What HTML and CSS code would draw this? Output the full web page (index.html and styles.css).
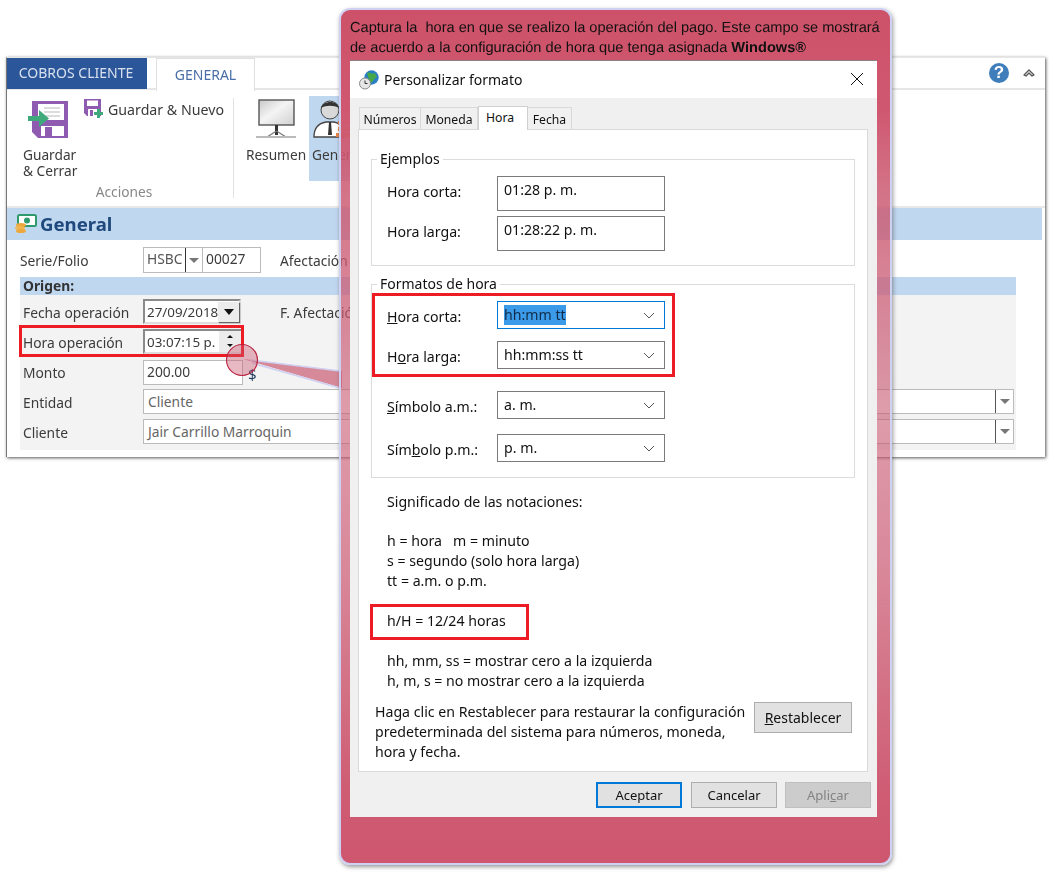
FILE: index.html
```html
<!DOCTYPE html>
<html lang="es">
<head>
<meta charset="utf-8">
<title>Personalizar formato</title>
<link rel="stylesheet" href="styles.css">
</head>
<body>
<div class="stage">

  <section class="app">
    <div class="app-tabs">
      <div class="tab-file">COBROS CLIENTE</div>
      <div class="tab-general">GENERAL</div>
      <div class="app-tabs-right">
        <span class="help">?</span>
        <svg class="collapse" width="14" height="10" viewBox="0 0 14 10"><path d="M2 7 L7 2 L12 7 L10 8 L7 5 L4 8 Z" fill="#fff" stroke="#555" stroke-width="1.3" stroke-linejoin="round"/></svg>
      </div>
    </div>

    <div class="ribbon">
      <div class="group-actions">
        <div class="actions-row">
          <div class="big-btn">
            <svg width="42" height="40" viewBox="0 0 42 40">
              <path d="M4 1 H40 V38 H10 L4 32 Z" fill="#8f5bb0"/>
              <path d="M10 4 H36 V20 H10 Z" fill="#fff"/>
              <path d="M16 8 H32 M16 12 H32 M16 16 H32" stroke="#b9b9b9" stroke-width="1.2"/>
              <path d="M13 26 H36 V36 H13 Z" fill="#fff"/>
              <path d="M17 27 H24 V36 H17 Z" fill="#8f5bb0"/>
              <path d="M0 16 H11 V10 L21 18.5 L11 27 V21 H0 Z" fill="#3fa97c"/>
            </svg>
            <span>Guardar<br>&amp; Cerrar</span>
          </div>
          <div class="small-btn">
            <svg width="21" height="20" viewBox="0 0 21 20">
              <path d="M1 1 H18 V18 H4 L1 15 Z" fill="#8f5bb0"/>
              <path d="M4 2.5 H15 V8 H4 Z" fill="#fff"/>
              <path d="M5 11 H14 V18 H5 Z" fill="#fff"/>
              <path d="M7 12 H10 V18 H7 Z" fill="#8f5bb0"/>
              <path d="M11 14 H14 V11 H17 V14 H20 V17 H17 V20 H14 V17 H11 Z" fill="#3fa97c"/>
            </svg>
            <span>Guardar &amp; Nuevo</span>
          </div>
        </div>
        <div class="group-label">Acciones</div>
      </div>
      <div class="group-views">
        <div class="view-btn">
          <svg width="42" height="42" viewBox="0 0 42 42">
            <defs><linearGradient id="scr" x1="0" y1="0" x2="1" y2="1"><stop offset="0" stop-color="#c9c9c9"/><stop offset=".45" stop-color="#f4f4f4"/><stop offset="1" stop-color="#d0d0d0"/></linearGradient></defs>
            <rect x="4" y="1" width="35" height="25" fill="url(#scr)" stroke="#555" stroke-width="1.4"/>
            <path d="M20 26 H23 L23 36 H20 Z" fill="#333"/>
            <path d="M21.5 32 L12 38 M21.5 32 L31 38" stroke="#777" stroke-width="1.2"/>
            <path d="M1 38 H41" stroke="#bbb" stroke-width="2"/>
          </svg>
          <span>Resumen</span>
        </div>
        <div class="view-btn view-active">
          <svg width="42" height="42" viewBox="0 0 42 42">
            <path d="M2 38 C2 28 8 24 14 23 L22 23 C28 24 32 28 32 38 Z" fill="#fff" stroke="#444" stroke-width="1.3"/>
            <circle cx="18" cy="11" r="9" fill="#d9d9d9" stroke="#444"/>
            <path d="M9 9 C11 1 26 1 27 9 C22 6 14 6 9 9 Z" fill="#333"/>
            <path d="M17 23 H19 L20 36 H16 Z" fill="#333"/>
            <path d="M26 22 H42 V26 H26 Z M26 28 H42 V32 H26 Z M24 34 H40 V38 H24 Z" fill="#e9854a"/>
          </svg>
          <span>General</span>
        </div>
      </div>
    </div>

    <h2 class="section-head">
      <svg width="22" height="20" viewBox="0 0 22 20">
        <rect x="3" y="1" width="18" height="11" rx="1.5" fill="#fff" stroke="#2f9a6e" stroke-width="2"/>
        <circle cx="12" cy="6.5" r="3" fill="#2f9a6e"/>
        <ellipse cx="6" cy="11" rx="5" ry="2" fill="#eda83c"/>
        <ellipse cx="5" cy="14" rx="5" ry="2" fill="#f2b552"/>
        <ellipse cx="6" cy="17" rx="5" ry="2" fill="#eda83c"/>
      </svg>
      General
    </h2>

    <div class="form">
      <div class="serie-row">
        <label class="lbl-serie">Serie/Folio</label>
        <div class="serie-combo"><span class="serie-text">HSBC</span><span class="drop-mini"><i class="arrow-grey"></i></span></div>
        <div class="folio">00027</div>
        <label class="lbl-right">Afectación</label>
      </div>
      <div class="origin-bar">Origen:</div>
      <div class="panel">
        <div class="row">
          <label>Fecha operación</label>
          <div class="field field-date">27/09/2018<span class="date-btn"><i class="arrow-black"></i></span></div>
          <label class="lbl-right2">F. Afectación</label>
        </div>
        <div class="row">
          <label>Hora operación</label>
          <div class="field field-time">03:07:15 p.<span class="spin"><i class="spin-up"></i><i class="spin-down"></i></span></div>
        </div>
        <div class="row row-monto">
          <label>Monto</label>
          <div class="field field-amount">200.00</div>
          <span class="currency">$</span>
        </div>
        <div class="row">
          <label>Entidad</label>
          <div class="field field-wide"><span class="grey-text">Cliente</span><span class="drop-wide"><i class="arrow-grey"></i></span></div>
        </div>
        <div class="row">
          <label>Cliente</label>
          <div class="field field-wide"><span class="grey-text">Jair Carrillo Marroquin</span><span class="drop-wide"><i class="arrow-grey"></i></span></div>
        </div>
      </div>
    </div>
    <div class="red-box red-hora"></div>
  </section>

  <svg class="pointer" width="1053" height="876" viewBox="0 0 1053 876">
    <path d="M243 359 L342 371 L342 388 Z" fill="#c9576e" fill-opacity=".68"/>
    <path d="M250 360 L340 371 M252 363 L340 388" stroke="#cfd0f2" stroke-width="1.6" fill="none"/>
    <circle cx="242" cy="360" r="15.5" fill="#c9576e" fill-opacity=".42" stroke="#bb2040" stroke-width="1.1"/>
  </svg>

  <section class="callout">
    <p class="callout-text"><span class="line-a">Captura la&nbsp; hora en que se realizo la operación del pago. Este campo se mostrará</span> <span class="line-b">de acuerdo a la configuración de hora que tenga asignada <b>Windows®</b></span></p>

    <div class="dialog">
      <div class="dlg-title">
        <svg width="20" height="20" viewBox="0 0 20 20">
          <circle cx="12.5" cy="7.5" r="7.2" fill="#2b7fc4"/>
          <path d="M8 3 C10 1 13 5 16 3 L18 7 C15 8 15 11 12 13 C10 10 9 7 8 3 Z" fill="#46a84a"/>
          <circle cx="6" cy="13.5" r="5.5" fill="#e6e6e6" stroke="#8a8a8a"/>
          <path d="M6 10.5 V13.5 H8.5" stroke="#333" fill="none"/>
        </svg>
        <span>Personalizar formato</span>
        <svg class="dlg-close" width="12" height="12" viewBox="0 0 12 12"><path d="M0 0 L12 12 M12 0 L0 12" stroke="#111" stroke-width="1"/></svg>
      </div>

      <div class="dlg-tabs">
        <div class="dtab dtab-num">Números</div>
        <div class="dtab dtab-mon">Moneda</div>
        <div class="dtab dtab-active">Hora</div>
        <div class="dtab dtab-fec">Fecha</div>
      </div>

      <div class="dlg-panel">
        <fieldset class="gb gb-examples">
          <legend>Ejemplos</legend>
          <div class="gb-row"><span class="gb-label">Hora corta:</span><div class="example">01:28 p. m.</div></div>
          <div class="gb-row"><span class="gb-label">Hora larga:</span><div class="example">01:28:22 p. m.</div></div>
        </fieldset>

        <fieldset class="gb gb-formats">
          <legend>Formatos de hora</legend>
          <div class="gb-row row-c"><span class="gb-label"><u>H</u>ora corta:</span>
            <div class="select select-focus"><span class="sel-text">hh:mm tt</span><svg width="12" height="7" viewBox="0 0 12 7"><path d="M1 1 L6 6 L11 1" fill="none" stroke="#555"/></svg></div></div>
          <div class="gb-row row-l"><span class="gb-label">H<u>o</u>ra larga:</span>
            <div class="select"><span>hh:mm:ss tt</span><svg width="12" height="7" viewBox="0 0 12 7"><path d="M1 1 L6 6 L11 1" fill="none" stroke="#555"/></svg></div></div>
          <div class="gb-row row-a"><span class="gb-label"><u>S</u>ímbolo a.m.:</span>
            <div class="select"><span>a. m.</span><svg width="12" height="7" viewBox="0 0 12 7"><path d="M1 1 L6 6 L11 1" fill="none" stroke="#555"/></svg></div></div>
          <div class="gb-row row-p"><span class="gb-label">Sím<u>b</u>olo p.m.:</span>
            <div class="select"><span>p. m.</span><svg width="12" height="7" viewBox="0 0 12 7"><path d="M1 1 L6 6 L11 1" fill="none" stroke="#555"/></svg></div></div>
        </fieldset>

        <div class="notes">
          <p>Significado de las notaciones:</p>
          <p>h = hora &nbsp; m = minuto<br>s = segundo (solo hora larga)<br>tt = a.m. o p.m.</p>
          <p>h/H = 12/24 horas</p>
          <p>hh, mm, ss = mostrar cero a la izquierda<br>h, m, s = no mostrar cero a la izquierda</p>
        </div>

        <div class="restore">
          <p>Haga clic en Restablecer para restaurar la configuración predeterminada del sistema para números, moneda, hora y fecha.</p>
          <button class="btn btn-restore" type="button"><u>R</u>establecer</button>
        </div>
      </div>

      <div class="dlg-foot">
        <button class="btn btn-ok" type="button">Aceptar</button>
        <button class="btn" type="button">Cancelar</button>
        <button class="btn btn-off" type="button">Apli<u>c</u>ar</button>
      </div>

      <div class="red-box red-formats"></div>
      <div class="red-box red-notation"></div>
    </div>
  </section>
</div>
</body>
</html>
```

FILE: styles.css
```css
* { box-sizing: border-box; }
html, body { margin: 0; padding: 0; background: #fff; }
body { font-family: "Noto Sans", "Open Sans", sans-serif; font-size: 14px; color: #111; }
.stage { position: relative; width: 1053px; height: 876px; overflow: hidden; }

/* Back window */
.app {
  position: absolute; left: 6px; top: 57px; width: 1039px; height: 400px;
  background: #fff; border-top: 1px solid #e6e6e6; border-left: 1px solid #777;
  box-shadow: 1px 1px 3px #555; filter: blur(.35px); color: #3b3b3b;
}
.app-tabs { display: flex; height: 32px; border-bottom: 2px solid #e6e6e6; }
.tab-file { width: 138px; height: 31px; margin-right: 2px; background: #2b579a; color: #d8e0ee; font-size: 14px; line-height: 30px; text-align: center; box-shadow: 2px 0 0 #2b579a; }
.tab-general { width: 99px; height: 33px; margin-left: 9px; background: #fff; border: 1px solid #e0e0e0; border-bottom: 0; color: #4a6ea8; font-size: 14px; line-height: 32px; text-align: center; }
.app-tabs-right { margin-left: auto; display: flex; align-items: center; gap: 13px; padding-right: 9px; height: 30px; }
.help { width: 20px; height: 20px; border-radius: 50%; background: #3f7dbb; color: #fff; font: bold 17px/20px "Liberation Sans", sans-serif; text-align: center; }

.ribbon { display: flex; height: 118px; border-bottom: 2px solid #e8e8e8; font-size: 13.7px; }
.group-actions { width: 227px; margin-top: 8px; height: 100px; border-right: 1px solid #e2e2e2; }
.actions-row { display: flex; height: 85px; }
.big-btn { width: 76px; padding-left: 21px; display: flex; flex-direction: column; }
.big-btn svg { margin-bottom: 7px; margin-top: 2px; }
.big-btn span { display: block; width: 44px; margin-left: -5px; text-align: center; line-height: 16px; white-space: nowrap; }
.small-btn { display: flex; align-items: flex-start; gap: 4px; }
.small-btn span { line-height: 24px; font-size: 14.2px; }
.group-label { text-align: center; color: #888; line-height: 18px; margin-left: 8px; }
.group-views { display: flex; margin-left: 9px; margin-top: 6px; }
.view-btn { width: 66px; height: 85px; display: flex; flex-direction: column; align-items: center; padding-top: 3px; gap: 5px; }
.view-btn span { line-height: 18px; }
.view-active { background: #c0d7f0; margin-left: 0; align-items: flex-start; padding-left: 3px; width: 66px; }

.section-head { margin: 0; height: 32px; background: #c0d7f0; display: flex; align-items: center; gap: 3px; padding-left: 8px; font-size: 18.6px; line-height: 30px; font-weight: bold; color: #1f497d; width: 1035px; }
.form { padding: 0 21px 0 13px; width: 1030px; font-size: 13.8px; }
.serie-row { height: 37px; display: flex; align-items: flex-start; padding-top: 7px; }
.lbl-serie { width: 123px; line-height: 27px; }
.serie-combo { width: 60px; height: 26px; border: 1px solid #bbb; display: flex; background: #fff; }
.serie-text { width: 41px; overflow: hidden; padding-left: 3px; line-height: 22px; color: #555; }
.drop-mini { width: 17px; border-left: 1px solid #333; display: flex; align-items: center; justify-content: center; }
.folio { width: 58px; height: 26px; border: 1px solid #bbb; border-left: 0; padding-left: 3px; line-height: 22px; background: #fff; }
.lbl-right { margin-left: 19px; line-height: 27px; white-space: nowrap; }
.origin-bar { height: 18px; background: #c0d7f0; font-weight: bold; padding-left: 3px; line-height: 17px; color: #333; }
.panel { height: 155px; background: #f3f3f3; padding: 4px 0 0 3px; }
.row { height: 30px; display: flex; align-items: flex-start; }
.row > label { width: 120px; line-height: 28px; white-space: nowrap; }
.row-monto { height: 29px; margin-top: 1px; }
.row-monto > label { line-height: 26px; }
.field { height: 25px; border: 1px solid #bbb; background: #fff; display: flex; padding-left: 4px; line-height: 24px; position: relative; white-space: nowrap; }
.field-date { width: 98px; border: 2px solid #8a8a8a; border-right-color: #ddd; border-bottom-color: #ddd; padding-left: 2px; line-height: 22px; font-size: 13.4px; }
.date-btn { position: absolute; right: 0; top: 1px; width: 21px; height: 20px; background: #ececec; box-shadow: 1px 1px 1px #666; display: flex; align-items: center; justify-content: center; }
.field-time { width: 100px; border: 2px solid #8a8a8a; border-right-color: #ddd; border-bottom-color: #ddd; padding-left: 2px; line-height: 22px; font-size: 13.4px; }
.spin { position: absolute; right: 0; top: 0; width: 22px; height: 21px; display: flex; flex-direction: column; align-items: center; background: #ececec; }
.spin-up { margin-top: 4px; border: 3px solid transparent; border-top: 0; border-bottom: 3px solid #111; }
.spin-down { margin-top: 6px; border: 3px solid transparent; border-bottom: 0; border-top: 3px solid #111; }
.field-amount { width: 100px; padding-left: 3px; line-height: 22px; }
.currency { margin-left: 5px; line-height: 28px; color: #1f3a60; font-size: 15px; }
.field-wide { width: 871px; }
.grey-text { color: #666; }
.drop-wide { position: absolute; right: 0; top: 0; bottom: 0; width: 18px; border-left: 1px solid #555; display: flex; align-items: center; justify-content: center; background: #fff; }
.arrow-grey { border: 5px solid transparent; border-bottom: 0; border-top: 5px solid #777; }
.arrow-black { border: 5px solid transparent; border-bottom: 0; border-top: 6px solid #111; }
.lbl-right2 { margin-left: 39px; width: auto !important; }

.red-box { position: absolute; border: 3px solid #ed1c24; pointer-events: none; }
.red-hora { left: 12px; top: 267px; width: 225px; height: 32px; }

/* Pointer */
.pointer { position: absolute; left: 0; top: 0; }

/* Callout */
.callout {
  position: absolute; left: 339px; top: 8px; width: 553px; height: 857px;
  border: 2px solid #cfd1f3; border-radius: 11px; padding: 8px 12px 0 9px;
  box-shadow: 1px 2px 4px rgba(70,70,70,.55);
  background: linear-gradient(to bottom, #cd5269 0, #cf5870 100px, rgba(203,88,112,.84) 180px, rgba(200,90,115,.6) 400px, rgba(200,85,110,.7) 560px, rgba(204,84,108,.95) 780px, #ce566e 856px);
}
.callout-text { margin: 0; height: 40px; font: 14.6px/20px "Liberation Sans", Arial, sans-serif; color: #111; width: 535px; text-rendering: geometricPrecision; }
.line-a, .line-b { display: block; white-space: nowrap; }
.dialog { position: relative; width: 527px; height: 757px; margin-top: 2px; background: #f0f0f0; border-top: 1px solid #8b7f80; font-size: 14.15px; }
.dlg-title { height: 37px; background: #fff; display: flex; align-items: center; padding-left: 9px; gap: 5px; font-size: 14px; }
.dlg-close { margin-left: auto; margin-right: 14px; margin-top: -2px; }
.dlg-tabs { display: flex; height: 31px; padding: 9px 0 0 9px; font-size: 12.2px; align-items: flex-end; }
.dtab { height: 22px; border: 1px solid #d9d9d9; border-bottom: 0; background: #f0f0f0; line-height: 24px; text-align: center; }
.dtab-num { width: 62px; }
.dtab-mon { width: 57px; border-left: 0; }
.dtab-fec { width: 44px; border-left: 0; }
.dtab-active { width: 50px; height: 24px; background: #fff; position: relative; top: 1px; z-index: 1; border-color: #d0d0d0; line-height: 22px; padding-right: 6px; }
.dlg-panel { margin: 0 9px 0 8px; height: 643px; background: #fff; border: 1px solid #d9d9d9; }
.gb { border: 1px solid #dcdcdc; margin: 0 0 0 12px; width: 484px; padding: 7px 15px 14px; }
.gb legend { padding: 0 3px; margin-left: -10px; line-height: 20px; font-size: 14px; }
.gb-examples { margin-top: 19px; }
.gb-formats { margin-top: 8px; padding-top: 7px; padding-bottom: 15px; }
.gb-row { display: flex; align-items: center; }
.gb-examples .gb-row { align-items: flex-start; }
.gb-examples .gb-label { line-height: 32px; }
.gb-label { width: 110px; }
.gb-formats .gb-label { padding-top: 2px; }
.example { width: 168px; height: 35px; border: 1px solid #7a7a7a; padding: 0 6px; line-height: 25px; }
.gb-examples .gb-row + .gb-row { margin-top: 5px; }
.row-l { margin-top: 12px; }
.row-a { margin-top: 22px; }
.row-p { margin-top: 15px; }
.select { width: 168px; height: 28px; border: 1px solid #7a7a7a; display: flex; align-items: center; justify-content: space-between; padding: 0 9px 0 6px; line-height: 24px; }
.select-focus { border-color: #0078d7; }
.sel-text { background: #3c9be8; color: #0f2b48; line-height: 20px; }
.notes { padding-left: 28px; margin-top: 14px; line-height: 20px; }
.notes p { margin: 0 0 20px; }
.notes p:first-child { margin-bottom: 19px; }
.restore { display: flex; align-items: flex-start; padding-left: 16px; margin-top: -9px; }
.restore p { margin: 0; width: 375px; line-height: 20px; }
.btn { font: inherit; font-size: 13px; color: #111; width: 86px; height: 26px; background: #e1e1e1; border: 1px solid #adadad; padding: 0; }
.btn-restore { width: 98px; height: 31px; margin-left: 4px; font-size: 14px; }
.dlg-foot { display: flex; justify-content: flex-end; gap: 8px; padding: 10px 6px 0 0; }
.btn-ok { border: 2px solid #0078d7; margin-right: 1px; }
.btn-off { background: #ccc; border-color: #bfbfbf; color: #838383; }
.red-formats { left: 22px; top: 232px; width: 303px; height: 84px; }
.red-notation { left: 20px; top: 543px; width: 159px; height: 36px; }
```
